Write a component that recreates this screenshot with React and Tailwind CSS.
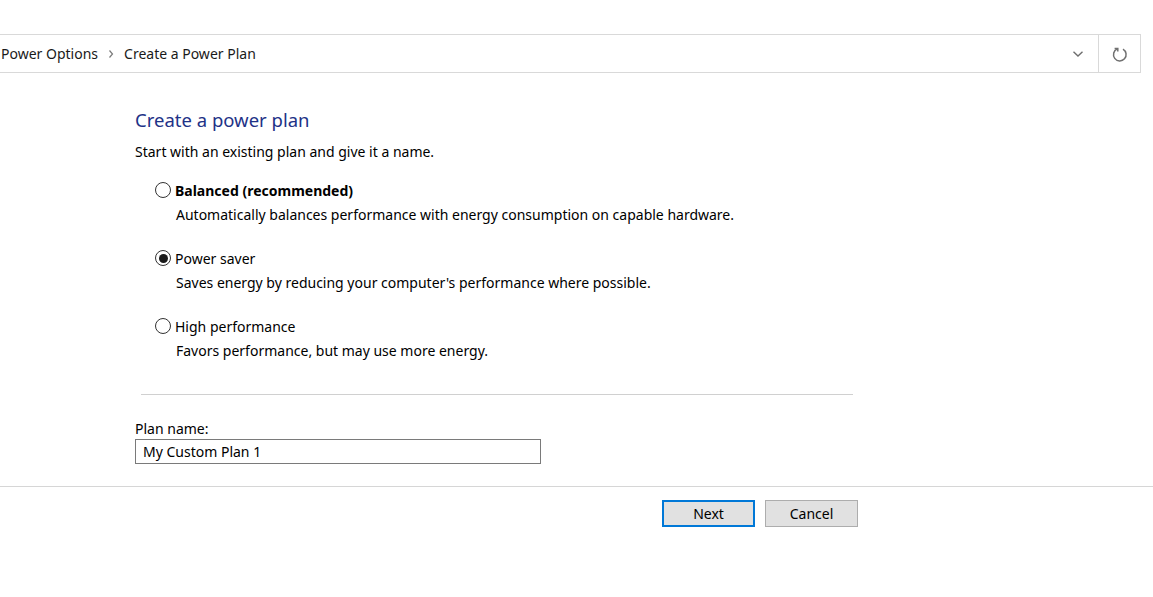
import React from "react";

function Radio({ checked }) {
  return (
    <span className="relative inline-flex h-[16px] w-[16px] shrink-0 items-center justify-center rounded-full border border-[#333333] bg-white">
      {checked && <span className="h-[9px] w-[9px] rounded-full bg-[#1a1a1a]" />}
    </span>
  );
}

function Option({ checked, label, bold, desc }) {
  return (
    <div className="flex flex-col">
      <div className="flex h-[20px] items-center gap-[4px]">
        <Radio checked={checked} />
        <span className={bold ? "font-bold text-black" : "text-black"}>{label}</span>
      </div>
      <div className="ml-[21px] mt-[5px] h-[20px] leading-[20px] text-black">{desc}</div>
    </div>
  );
}

export default function App() {
  return (
    <div
      className="h-[597px] w-[1153px] overflow-hidden bg-white text-[14px] text-black"
      style={{ fontFamily: '"Segoe UI", "Noto Sans", "Liberation Sans", sans-serif' }}
    >
      <div className="pt-[34px]">
        <div className="flex h-[39px] w-[1141px] items-stretch border-y border-r border-[#d9d9d9]">
          <div className="flex flex-1 items-center pl-[1px] text-[14px] text-[#1a1a1a]">
            <span>Power Options</span>
            <svg width="8" height="10" viewBox="0 0 8 10" className="mx-[9px]" fill="none" stroke="#7a7a7a" strokeWidth="1.2">
              <path d="M2.5 1.5 L5.5 5 L2.5 8.5" />
            </svg>
            <span>Create a Power Plan</span>
          </div>
          <div className="flex w-[41px] items-center justify-center">
            <svg width="12" height="8" viewBox="0 0 12 8" fill="none" stroke="#6e6e6e" strokeWidth="1.4">
              <path d="M1.5 1.8 L6 6 L10.5 1.8" />
            </svg>
          </div>
          <div className="w-px bg-[#d9d9d9]" />
          <div className="flex w-[41px] items-center justify-center">
            <svg width="16" height="17" viewBox="0 0 16 17" fill="none" stroke="#707070" strokeWidth="1.5">
              <path d="M11 4.2 A6.3 6.3 0 1 1 5.2 3.9" />
              <path d="M2.6 3.4 L5.8 3.4 L5.8 6.6" />
            </svg>
          </div>
        </div>
      </div>

      <div className="pl-[135px] pt-[33px]">
        <div className="text-[18.5px] leading-[28px] text-[#1e3287]">Create a power plan</div>
        <div className="mt-[8px] leading-[20px]">Start with an existing plan and give it a name.</div>

        <div className="ml-[20px] mt-[18px] flex flex-col gap-[23px]">
          <Option bold label="Balanced (recommended)" desc="Automatically balances performance with energy consumption on capable hardware." />
          <Option checked label="Power saver" desc="Saves energy by reducing your computer's performance where possible." />
          <Option label="High performance" desc="Favors performance, but may use more energy." />
        </div>

        <div className="ml-[6px] mt-[33px] h-px w-[712px] bg-[#d0d0d0]" />

        <div className="mt-[24px] leading-[20px]">Plan name:</div>
        <div className="flex h-[25px] w-[406px] items-center border border-[#7a7a7a] px-[7px]">
          My Custom Plan 1
        </div>
      </div>

      <div className="mt-[22px] h-px w-full bg-[#d6d6d6]" />

      <div className="flex gap-[10px] pl-[662px] pt-[13px]">
        <button className="flex h-[27px] w-[93px] items-center justify-center border-2 border-[#0078d7] bg-[#e1e1e1] text-[14px] text-black">
          Next
        </button>
        <button className="flex h-[27px] w-[93px] items-center justify-center border border-[#adadad] bg-[#e1e1e1] text-[14px] text-black">
          Cancel
        </button>
      </div>
    </div>
  );
}
